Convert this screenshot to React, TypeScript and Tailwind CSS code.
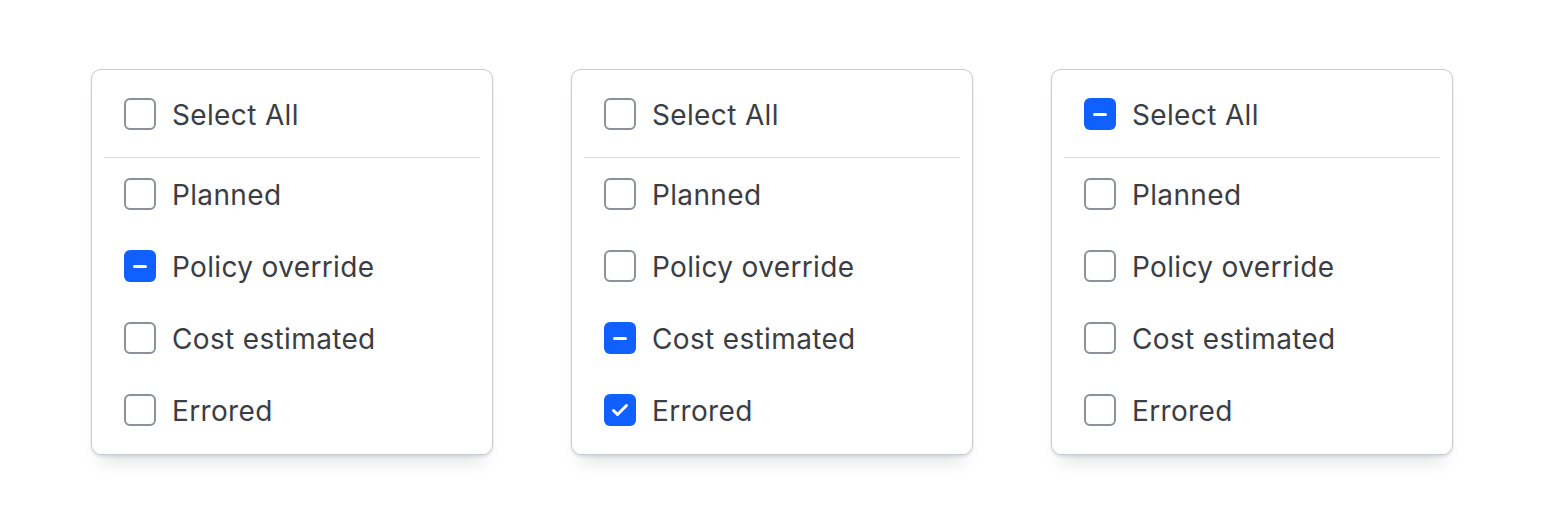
import React from "react";

type State = "off" | "on" | "mixed";

function Box({ state }: { state: State }) {
  if (state === "off") {
    return <span className="block w-[32px] h-[32px] shrink-0 rounded-[6px] border-2 border-[#8c909c] bg-white" />;
  }
  return (
    <span className="flex items-center justify-center w-[32px] h-[32px] shrink-0 rounded-[6px] bg-[#1060ff]">
      {state === "mixed" ? (
        <span className="block w-[14px] h-[3px] rounded-full bg-white" />
      ) : (
        <svg width="32" height="32" viewBox="0 0 32 32" fill="none">
          <polyline points="9.5,16.5 13.5,20.5 22.5,11.5" stroke="white" strokeWidth="3" strokeLinecap="round" strokeLinejoin="round" />
        </svg>
      )}
    </span>
  );
}

function Row({ label, state }: { label: string; state: State }) {
  return (
    <div className="flex items-center gap-[16px] pl-[20px] h-[32px]">
      <Box state={state} />
      <span className="pt-[2px] text-[28px] leading-none font-[430] text-[#3b3d45] tracking-[0.35px]">{label}</span>
    </div>
  );
}

const labels = ["Planned", "Policy override", "Cost estimated", "Errored"];

function Card({ all, items }: { all: State; items: State[] }) {
  return (
    <div className="w-[402px] rounded-[10px] border border-[#c9cad0] bg-white px-[12px] shadow-[0_2px_3px_0_rgba(101,106,118,0.15),0_16px_16px_-10px_rgba(101,106,118,0.2)]">
      <div className="pt-[28px] pb-[27px]">
        <Row label="Select All" state={all} />
      </div>
      <div className="h-px bg-[#dcdde2]" />
      <div className="flex flex-col gap-[40px] pt-[20px] pb-[28px]">
        {labels.map((l, i) => (
          <Row key={l} label={l} state={items[i]} />
        ))}
      </div>
    </div>
  );
}

export default function App() {
  return (
    <div
      className="w-[1544px] h-[524px] bg-white flex justify-center items-start gap-[78px] pt-[69px]"
      style={{ fontFamily: "Inter, 'Noto Sans', sans-serif" }}
    >
      <Card all="off" items={["off", "mixed", "off", "off"]} />
      <Card all="off" items={["off", "off", "mixed", "on"]} />
      <Card all="mixed" items={["off", "off", "off", "off"]} />
    </div>
  );
}
